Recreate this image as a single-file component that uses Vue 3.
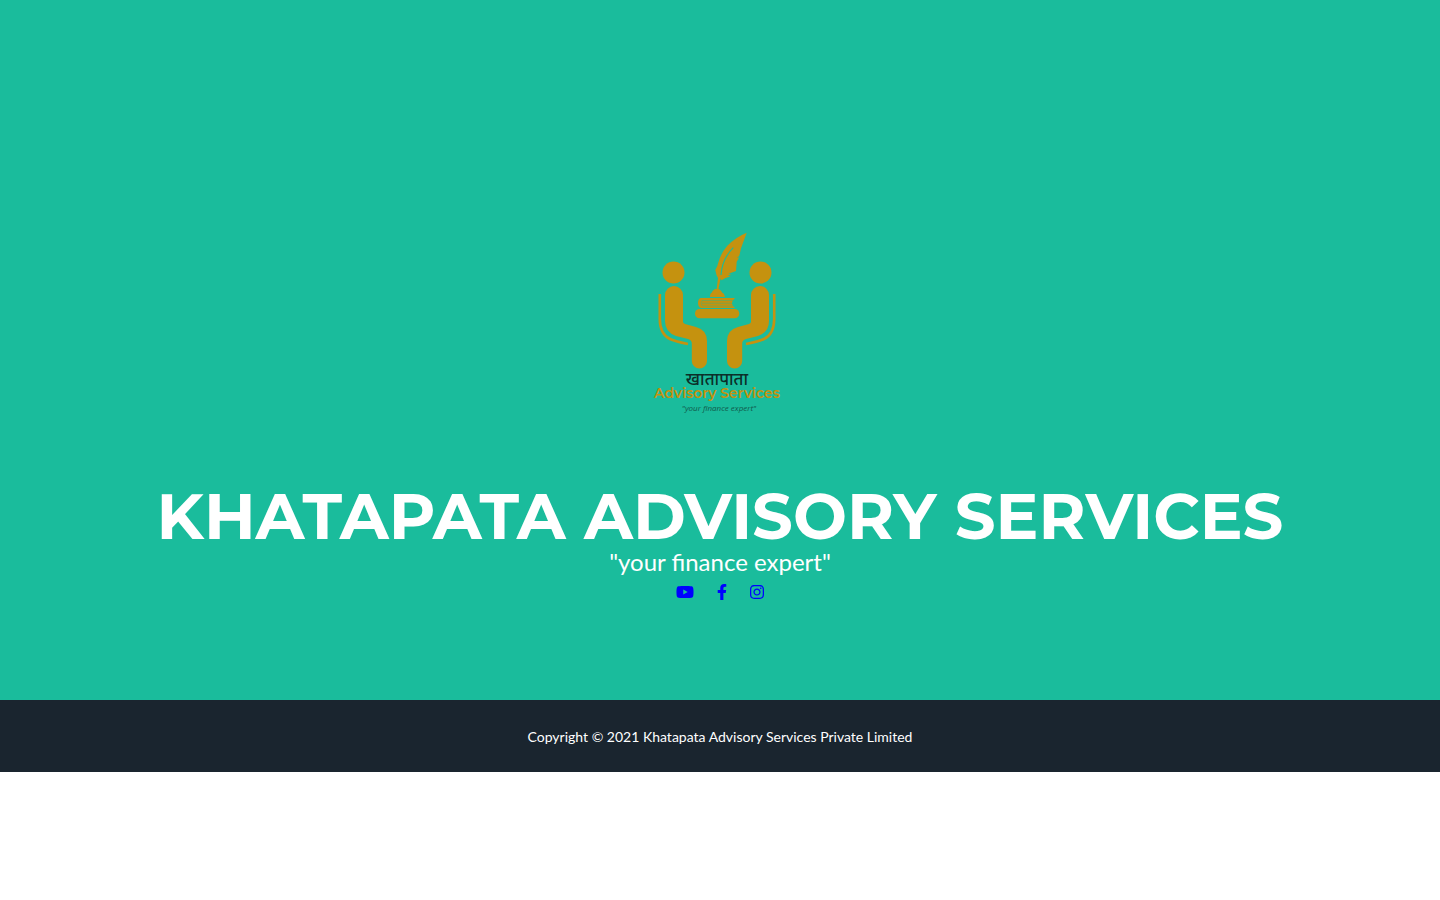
<script setup>
const socials = [
  {
    name: 'YouTube',
    width: 576,
    path: 'M549.655 124.083c-6.281-23.65-24.787-42.276-48.284-48.597C458.781 64 288 64 288 64S117.22 64 74.629 75.486c-23.497 6.322-42.003 24.947-48.284 48.597-11.412 42.867-11.412 132.305-11.412 132.305s0 89.438 11.412 132.305c6.281 23.65 24.787 41.5 48.284 47.821C117.22 448 288 448 288 448s170.78 0 213.371-11.486c23.497-6.321 42.003-24.171 48.284-47.821 11.412-42.867 11.412-132.305 11.412-132.305s0-89.438-11.412-132.305zm-317.51 213.508V175.185l142.739 81.205-142.739 81.201z',
  },
  {
    name: 'Facebook',
    width: 320,
    path: 'M279.14 288l14.22-92.66h-88.91v-60.13c0-25.35 12.42-50.06 52.24-50.06h40.42V6.26S260.43 0 225.36 0c-73.22 0-121.08 44.38-121.08 124.72v70.62H22.89V288h81.39v224h100.17V288z',
  },
  {
    name: 'Instagram',
    width: 448,
    path: 'M224.1 141c-63.6 0-114.9 51.3-114.9 114.9s51.3 114.9 114.9 114.9S339 319.5 339 255.9 287.7 141 224.1 141zm0 189.6c-41.1 0-74.7-33.5-74.7-74.7s33.5-74.7 74.7-74.7 74.7 33.5 74.7 74.7-33.6 74.7-74.7 74.7zm146.4-194.3c0 14.9-12 26.8-26.8 26.8-14.9 0-26.8-12-26.8-26.8s12-26.8 26.8-26.8 26.8 12 26.8 26.8zm76.1 27.2c-1.7-35.9-9.9-67.7-36.2-93.9-26.2-26.2-58-34.4-93.9-36.2-37-2.1-147.9-2.1-184.9 0-35.8 1.7-67.6 9.9-93.9 36.1s-34.4 58-36.2 93.9c-2.1 37-2.1 147.9 0 184.9 1.7 35.9 9.9 67.7 36.2 93.9s58 34.4 93.9 36.2c37 2.1 147.9 2.1 184.9 0 35.9-1.7 67.7-9.9 93.9-36.2 26.2-26.2 34.4-58 36.2-93.9 2.1-37 2.1-147.8 0-184.8zM398.8 388c-7.8 19.6-22.9 34.7-42.6 42.6-29.5 11.7-99.5 9-132.1 9s-102.7 2.6-132.1-9c-19.6-7.8-34.7-22.9-42.6-42.6-11.7-29.5-9-99.5-9-132.1s-2.6-102.7 9-132.1c7.8-19.6 22.9-34.7 42.6-42.6 29.5-11.7 99.5-9 132.1-9s102.7-2.6 132.1 9c19.6 7.8 34.7 22.9 42.6 42.6 11.7 29.5 9 99.5 9 132.1s2.7 102.7-9 132.1z',
  },
]
</script>

<template>
  <header class="masthead">
    <svg class="logo" viewBox="0 0 160 200" role="img" aria-label="Khatapata Advisory Services logo">
      <g class="gold">
        <g id="person">
          <circle cx="33.5" cy="47.5" r="11" />
          <path d="M25 70a9 9 0 0 1 18 0V97Q43 98 45 99L56 102Q67 105 67 116V136a7.6 7.6 0 0 1-15.2 0V119Q52 115 48 114L36 111Q25 107 25 96Z" />
          <path class="chair" d="M19.8 69V94Q19.8 109 30 114Q34 116 48 119" />
        </g>
        <use href="#person" transform="translate(154 0) scale(-1 1)" />
        <path d="M106.7 7.7Q96 12 87.3 20.7Q81 28 78.500 37L77.300 41L75.300 45L76.500 50L78 53L76.700 64H75C73 65 72 67 71.500 68Q70 68 70 72H85Q84 68 82.500 68Q80 64 78.500 64L80.500 53.500L81.500 55.300L85 53.300L90.700 51.300L87.500 50.700L91.300 49.300L88.500 48.700L96 46L96.700 36.700L99.300 32.300L96.700 33.300L99.300 30.700L101 23.300Z" />
        <path d="M60.500 73H95L93 75.500Q91 78 93 81L95 83H61Q58 82 58 78Q58 74 60.500 73Z" />
        <rect x="55" y="84" width="44.300" height="9.300" rx="4.600" />
      </g>
      <path class="quill-slit" d="M81 50Q82 34 93.300 22.700" />
      <path class="page-line" d="M93 75.500H62Q60 78 62 81H93M62 78.200H92" />
      <text class="hindi" x="77" y="160">खातापाता</text>
      <text class="brand" x="77" y="173">Advisory Services</text>
      <text class="motto" x="79" y="186">"your finance expert"</text>
    </svg>
    <h1>Khatapata Advisory Services</h1>
    <p class="tagline">"your finance expert"</p>
    <nav class="socials" aria-label="Social media">
      <a v-for="s in socials" :key="s.name" href="#" :aria-label="s.name">
        <svg :viewBox="`0 0 ${s.width} 512`" aria-hidden="true"><path :d="s.path" /></svg>
      </a>
    </nav>
  </header>
  <footer class="copyright">
    <small>Copyright © 2021 Khatapata Advisory Services Private Limited</small>
  </footer>
</template>

<style>
body {
  margin: 0;
  background: #fff;
}
</style>

<style scoped>
.masthead {
  display: flex;
  flex-direction: column;
  align-items: center;
  padding: 225px 24px 100px;
  background: #1abc9c;
  color: #fff;
  font-family: Lato, "Open Sans", sans-serif;
  text-align: center;
}
.logo {
  width: 160px;
  height: 200px;
  margin-bottom: 59px;
}
.gold {
  fill: #c5920f;
}
.chair {
  fill: none;
  stroke: #c5920f;
  stroke-width: 2.6;
}
.quill-slit {
  fill: none;
  stroke: #1abc9c;
  stroke-width: 1.1;
}
.page-line {
  fill: none;
  stroke: #1abc9c;
  stroke-width: 0.4;
}
.logo text {
  text-anchor: middle;
}
.hindi {
  font: 500 17px "Noto Sans", "Noto Sans Devanagari", sans-serif;
  fill: #0b2f29;
}
.brand {
  font: 600 14px Montserrat, "DejaVu Sans", sans-serif;
  fill: #c5920f;
}
.motto {
  font: italic 8px "Open Sans", sans-serif;
  fill: #11594b;
}
h1 {
  margin: 0;
  font: 700 64px/64px Montserrat, Inter, sans-serif;
  text-transform: uppercase;
}
.tagline {
  margin: 0;
  font-size: 24px;
  line-height: 28px;
}
.socials {
  display: flex;
  gap: 23px;
  margin-top: 8px;
}
.socials a {
  display: block;
  height: 16px;
  color: #00f;
}
.socials svg {
  display: block;
  height: 16px;
  fill: currentColor;
}
.copyright {
  padding: 25px 24px 23px;
  background: #1a252f;
  color: #fff;
  font-family: Lato, "Open Sans", sans-serif;
  line-height: 24px;
  text-align: center;
}
.copyright small {
  display: block;
  font-size: 14px;
}
</style>
